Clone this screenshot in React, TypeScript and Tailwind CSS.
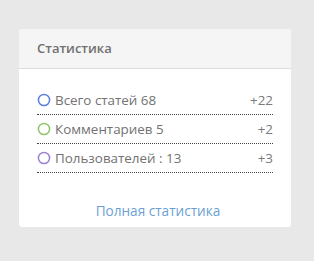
import React from "react";

const rows = [
  { label: "Всего статей 68", value: "+22", color: "#5b7fe0" },
  { label: "Комментариев 5", value: "+2", color: "#8fc46f" },
  { label: "Пользователей : 13", value: "+3", color: "#9a80d2" },
];

function Ring({ color }: { color: string }) {
  return (
    <svg width="14" height="14" viewBox="0 0 14 14" className="shrink-0">
      <circle cx="7" cy="7" r="5.6" fill="none" stroke={color} strokeWidth="1.5" />
    </svg>
  );
}

export default function App() {
  return (
    <div
      className="w-[314px] h-[261px] bg-[#e8e8e8] pt-[29px] pl-[19px]"
      style={{ fontFamily: '"Open Sans", "Noto Sans", sans-serif' }}
    >
      <div className="w-[272px] h-[198px] bg-white rounded-[3px] overflow-hidden flex flex-col">
        <div className="h-[40px] bg-[#f5f5f5] border-b border-[#dcdcdc] flex items-center px-[18px]">
          <span className="text-[13px] font-semibold text-[#707070]">Статистика</span>
        </div>
        <div className="px-[18px] pt-[17px]">
          {rows.map((r) => (
            <div
              key={r.label}
              className="h-[29px] flex items-center justify-between border-b border-dotted border-[#444]"
            >
              <div className="flex items-center gap-[4px]">
                <Ring color={r.color} />
                <span className="text-[13.4px] text-[#727272]">{r.label}</span>
              </div>
              <span className="text-[13.4px] text-[#7a7a7a]">{r.value}</span>
            </div>
          ))}
        </div>
        <div className="flex justify-center pt-[28px] pl-[6px]">
          <span className="text-[13.6px] text-[#6b9fd3]">Полная статистика</span>
        </div>
      </div>
    </div>
  );
}
